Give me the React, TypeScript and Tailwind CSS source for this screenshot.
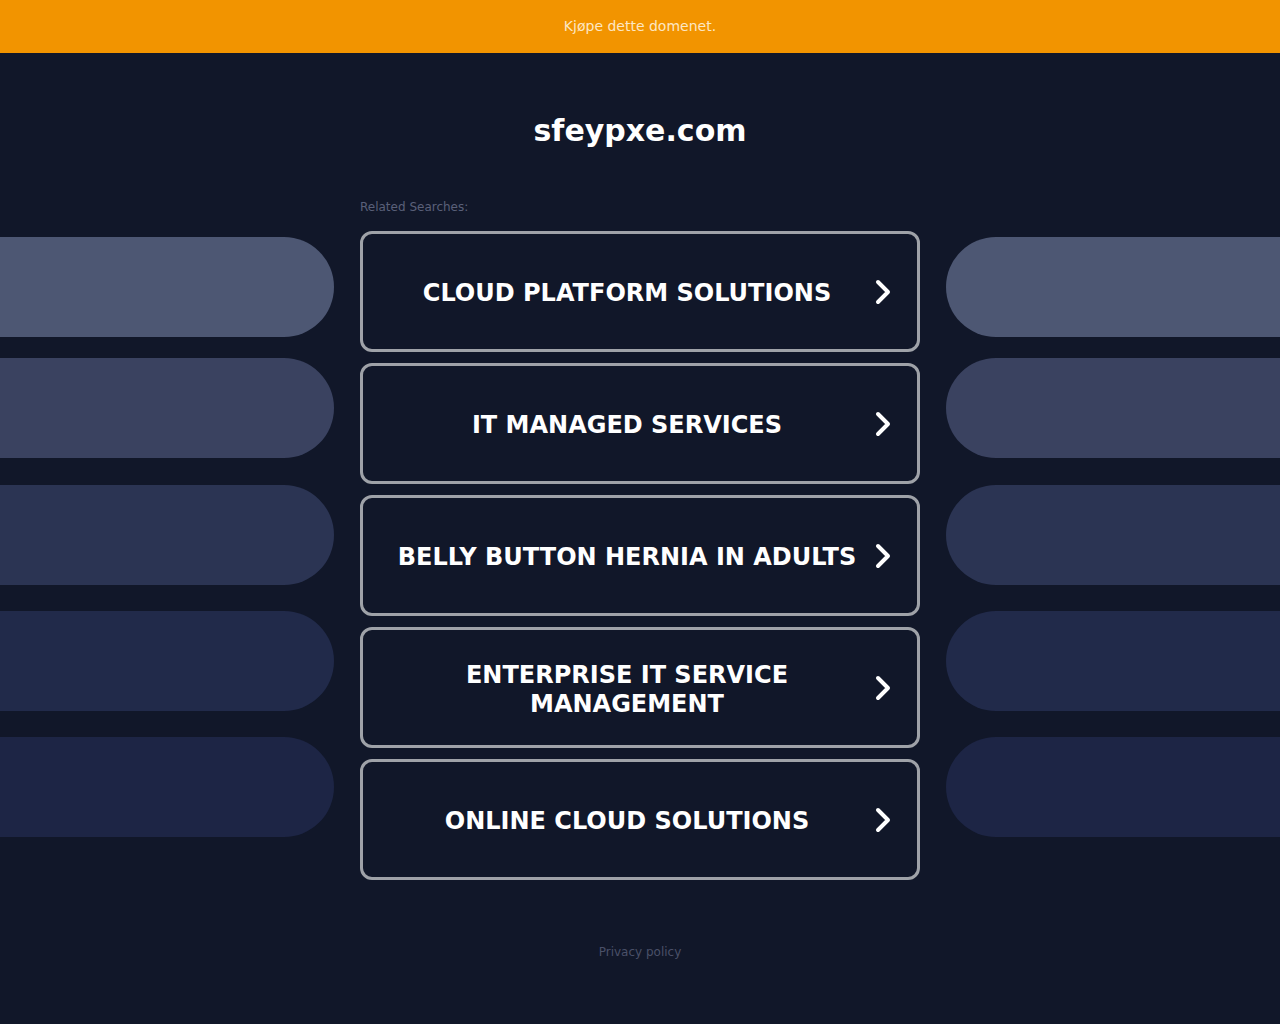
import React from 'react';

const searches = [
    'Cloud Platform Solutions',
    'IT Managed Services',
    'Belly Button Hernia in Adults',
    'Enterprise IT Service Management',
    'Online Cloud Solutions',
];

// pill colours from top to bottom, with their top margins
const pills = [
    { bg: 'bg-[#4d5773]', mt: 'mt-[36px]' },
    { bg: 'bg-[#3a4260]', mt: 'mt-[21px]' },
    { bg: 'bg-[#2b3453]', mt: 'mt-[27px]' },
    { bg: 'bg-[#212a4a]', mt: 'mt-[26px]' },
    { bg: 'bg-[#1d2545]', mt: 'mt-[26px]' },
];

function Chevron() {
    return (
        <svg width="18" height="28" viewBox="0 0 18 28" className="shrink-0">
            <path d="M4 4 L14 14 L4 24" fill="none" stroke="white" strokeWidth="4" strokeLinecap="round" strokeLinejoin="round" />
        </svg>
    );
}

export default function App() {
    return (
        <div className="min-h-screen w-full bg-[#111729] font-['DejaVu_Sans',sans-serif]">
            <div className="h-[53px] bg-[#f29400] flex items-center justify-center">
                <a className="text-[14px] text-[#fde7c4]">Kjøpe dette domenet.</a>
            </div>

            <h1 className="text-center text-white font-bold text-[30px] leading-none pt-[63px]">sfeypxe.com</h1>

            <div className="flex justify-between mt-[55px]">
                {/* left pills */}
                <div className="w-[334px] flex flex-col">
                    {pills.map((p, i) => (
                        <div key={i} className={`h-[100px] rounded-r-full ${p.bg} ${p.mt}`}></div>
                    ))}
                </div>

                <div className="w-[560px]">
                    <div className="text-[12px] text-[#5a6079] leading-none mb-[18px]">Related Searches:</div>
                    <div className="flex flex-col gap-[11px]">
                        {searches.map(s => (
                            <a key={s} className="h-[121px] border-[3px] border-[#9fa2a8] rounded-[12px] flex items-center pl-[27px] pr-[25px]">
                                <span className="flex-1 text-center text-white font-bold uppercase text-[24px] leading-[29px] pt-[4px]">{s}</span>
                                <span className="ml-[10px]"><Chevron /></span>
                            </a>
                        ))}
                    </div>
                </div>

                {/* right pills */}
                <div className="w-[334px] flex flex-col">
                    {pills.map((p, i) => (
                        <div key={i} className={`h-[100px] rounded-l-full ${p.bg} ${p.mt}`}></div>
                    ))}
                </div>
            </div>

            <div className="text-center text-[12px] text-[#4a5068] mt-[63px] pb-[60px]">Privacy policy</div>
        </div>
    );
}
